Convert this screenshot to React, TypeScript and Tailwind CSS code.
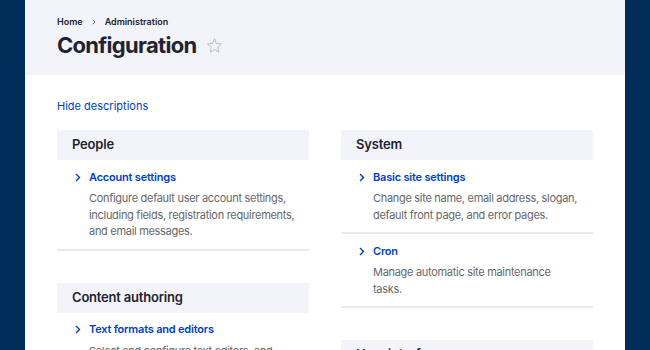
import React from 'react'

type Item = { title: string; desc: string }
type Block = { title: string; items: Item[] }

const left: Block[] = [
  {
    title: 'People',
    items: [
      {
        title: 'Account settings',
        desc: 'Configure default user account settings, including fields, registration requirements, and email messages.',
      },
    ],
  },
  {
    title: 'Content authoring',
    items: [
      {
        title: 'Text formats and editors',
        desc: 'Select and configure text editors, and how content is filtered when displayed.',
      },
    ],
  },
]

const right: Block[] = [
  {
    title: 'System',
    items: [
      {
        title: 'Basic site settings',
        desc: 'Change site name, email address, slogan, default front page, and error pages.',
      },
      { title: 'Cron', desc: 'Manage automatic site maintenance tasks.' },
    ],
  },
  {
    title: 'User interface',
    items: [{ title: 'Shortcuts', desc: 'Add and modify shortcut sets.' }],
  },
]

function Chevron() {
  return (
    <svg width="6" height="9" viewBox="0 0 6 9" className="shrink-0">
      <path d="M1 1l3.5 3.5L1 8" fill="none" stroke="#003ecc" strokeWidth="1.4" />
    </svg>
  )
}

function AdminBlock({ block }: { block: Block }) {
  return (
    <div className="mb-8">
      <div className="h-[30px] bg-[#f3f4f9] flex items-center pl-[15px] text-[13px] font-semibold tracking-[-0.2px] text-[#222330]">
        {block.title}
      </div>
      {block.items.map(item => (
        <div key={item.title} className="border-b-2 border-[#ebebee] pt-[9px] pb-[9px] pr-[14px]">
          <div className="flex items-center h-4">
            <div className="w-8 flex pl-[18px]">
              <Chevron />
            </div>
            <span className="text-[11px] font-semibold tracking-[-0.2px] text-[#003ecc]">{item.title}</span>
          </div>
          <p className="pl-8 mt-[5px] text-[11px] leading-[16.5px] tracking-[-0.3px] text-[#66676d]">{item.desc}</p>
        </div>
      ))}
    </div>
  )
}

export default function App() {
  return (
    <div className="w-[650px] h-[350px] overflow-hidden bg-[#002c5a] px-[25px] font-['Inter',sans-serif]">
      <div className="h-full bg-white">
        <div className="h-[75px] bg-[#f3f4f9] pl-8 pt-[15px]">
          <div className="flex items-center gap-[9px] text-[9px] font-semibold text-[#222330]">
            <span>Home</span>
            <svg width="4" height="6" viewBox="0 0 4 6">
              <path d="M0.8 0.8L3 3L0.8 5.2" fill="none" stroke="#55565b" strokeWidth="0.9" />
            </svg>
            <span>Administration</span>
          </div>
          <div className="flex items-center gap-[9px] mt-[1px]">
            <h1 className="text-[22px] leading-[30px] font-bold tracking-[-0.7px] text-[#222330]">Configuration</h1>
            <svg width="17" height="17" viewBox="0 0 24 24" className="mt-[1px]">
              <path
                d="M12 2.5l2.8 6.6 7.1.6-5.4 4.7 1.6 7-6.1-3.7-6.1 3.7 1.6-7-5.4-4.7 7.1-.6z"
                fill="none"
                stroke="#a3a6ae"
                strokeWidth="1"
                strokeLinejoin="round"
              />
            </svg>
          </div>
        </div>
        <div className="px-8 pt-[23px]">
          <a className="text-[11px] text-[#003ecc] leading-4 block">Hide descriptions</a>
          <div className="grid grid-cols-2 gap-8 mt-[16px]">
            <div>
              {left.map(b => (
                <AdminBlock key={b.title} block={b} />
              ))}
            </div>
            <div>
              {right.map(b => (
                <AdminBlock key={b.title} block={b} />
              ))}
            </div>
          </div>
        </div>
      </div>
    </div>
  )
}
